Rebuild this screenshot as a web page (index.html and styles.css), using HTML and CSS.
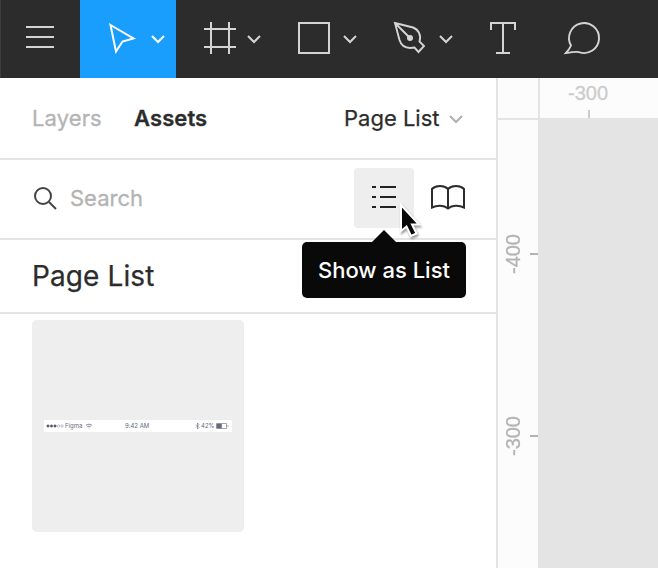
FILE: index.html
```html
<!DOCTYPE html>
<html lang="en">
<head>
<meta charset="utf-8">
<title>Assets</title>
<link rel="stylesheet" href="styles.css">
</head>
<body>
<div class="app">
  <header class="toolbar">
    <div class="tool tool-menu"><svg width="80" height="78"><path d="M26 27h28M26 37h28M26 47h28"/></svg></div>
    <div class="tool active"><svg width="96" height="78"><path d="M30.500 25L53.500 38.500 42.500 41.500 36 51.500Z"/><path class="chev" d="M72 36l6 6 6-6"/></svg></div>
    <div class="tool"><svg width="96" height="78"><path d="M35 22v32M53 22v32M28 29h32M28 47h32"/><path class="chev" d="M72 36l6 6 6-6"/></svg></div>
    <div class="tool"><svg width="96" height="78"><path d="M27 23h30v30H27z"/><path class="chev" d="M72 36l6 6 6-6"/></svg></div>
    <div class="tool"><svg width="96" height="78"><path class="thin" d="M27 23L45 27.500C50.500 29.500 53.500 35 51.500 41.500L56 46 50.500 52 46.500 47.500C39 49 33.500 46.500 31.500 40ZM27 23L41 37"/><circle class="dot" cx="42" cy="38" r="3"/><path class="chev" d="M72 36l6 6 6-6"/></svg></div>
    <div class="tool tool-small"><svg width="80" height="78"><path d="M27 30v-7h24v7M39 23v30M32 53h14"/></svg></div>
    <div class="tool tool-small"><svg width="80" height="78"><path class="thin" d="M27 45.500A15 15 0 1 1 35 52.200Q33 51.200 22 53Q25.500 49 27 45.500Z"/></svg></div>
  </header>
  <main class="workspace">
    <aside class="panel">
      <nav class="tabs">
        <span class="tab">Layers</span><span class="tab selected">Assets</span>
        <span class="page">Page List</span><svg class="page-chev" width="16" height="12"><path d="M2 3l6 6 6-6"/></svg>
      </nav>
      <div class="search">
        <svg class="lens" width="26" height="26"><circle cx="11" cy="11" r="8"/><path d="M17 17l7 7"/></svg>
        <span class="placeholder">Search</span>
        <div class="list-button">
          <svg width="60" height="60"><path d="M18 19h4M26 19h16M18 29h4M26 29h16M18 39h4M26 39h16"/></svg>
          <div class="tooltip">Show as List</div>
          <svg class="pointer" width="26" height="38"><path d="M2 3v26l5.500-4.500 4.500 9.500 5.500-2.500-4.500-9H20Z"/></svg>
        </div>
        <svg class="book" width="36" height="28"><path d="M2 23.500V5C6 1 14 1 18 5 22 1 30 1 34 5V23.500C29 21 22 21 18 24.500 14 21 7 21 2 23.500ZM18 5v19"/></svg>
      </div>
      <h2 class="heading">Page List</h2>
      <div class="assets">
        <div class="card">
          <div class="status">
            <svg class="signal" width="18" height="6"><circle class="full" cx="2" cy="3" r="1.300"/><circle class="full" cx="5.500" cy="3" r="1.300"/><circle class="full" cx="9" cy="3" r="1.300"/><circle cx="12.500" cy="3" r="1.200"/><circle cx="16" cy="3" r="1.200"/></svg>
            <span class="carrier">Figma</span>
            <svg class="wifi" width="8" height="6"><path d="M1 2.200Q4 .1 7 2.200M2.300 3.700Q4 2.600 5.700 3.700M3.700 5h.7"/></svg>
            <span class="time">9:42 AM</span>
            <svg class="bluetooth" width="5" height="8"><path d="M1 2.500l3 3-1.500 1.500v-6L4 2.500l-3 3"/></svg>
            <span class="percent">42%</span>
            <svg class="battery" width="13" height="6"><path d="M.5.5h10v5H.5z"/><path class="charge" d="M1 1h4.500v4H1z"/><path d="M12 2v2"/></svg>
          </div>
        </div>
      </div>
    </aside>
    <section class="stage">
      <div class="corner"></div>
      <div class="ruler-top"><span>-300</span><i></i></div>
      <div class="ruler-left">
        <div class="mark mark-400"><span>-400</span><i></i></div>
        <div class="mark"><span>-300</span><i></i></div>
      </div>
      <div class="canvas"></div>
    </section>
  </main>
</div>
</body>
</html>
```

FILE: styles.css
```css
* { box-sizing: border-box; }
body { margin: 0; overflow: hidden; background: #fff; font-family: Inter, "Liberation Sans", sans-serif; color: #2c2c2c; }
svg { display: block; flex: none; fill: none; }
.app { width: 658px; height: 568px; display: flex; flex-direction: column; }
.toolbar { display: flex; height: 78px; flex: none; background: #2c2c2c; overflow: hidden; }
.tool { width: 96px; flex: none; stroke: #d4d4d4; stroke-width: 2; }
.tool-menu { width: 80px; box-shadow: inset 1px 0 #3d3d3d; }
.tool-small { width: 80px; }
.tool.active { background: #1a9efe; stroke: #fff; }
.thin { stroke-width: 1.9; stroke-linejoin: miter; }
.chev { stroke-width: 2; }
.dot { fill: #d4d4d4; stroke: none; }
.workspace { display: flex; flex: 1; }
.panel { width: 498px; border-right: 2px solid #e4e4e4; }
.tabs { height: 82px; border-bottom: 2px solid #e4e4e4; display: flex; align-items: center; padding-left: 32px; font-size: 22px; line-height: 80px; white-space: nowrap; }
.tab { width: 102px; color: #b4b4b4; letter-spacing: .1px; -webkit-text-stroke: .3px; }
.tab.selected { font-weight: 600; color: #2c2c2c; width: 210px; }
.page { width: 104px; -webkit-text-stroke: .25px; }
.page-chev { stroke: #b0b0b0; stroke-width: 2; margin-top: 2px; }
.search { height: 80px; border-bottom: 2px solid #e4e4e4; display: flex; align-items: center; padding: 0 0 2px 32px; }
.lens { stroke: #444; stroke-width: 2; margin-right: 12px; }
.placeholder { width: 284px; font-size: 22px; color: #b3b3b3; -webkit-text-stroke: .3px; }
.list-button { position: relative; width: 60px; height: 60px; border-radius: 4px; background: #eee; stroke: #222; stroke-width: 2; }
.book { stroke: #2c2c2c; stroke-width: 2; margin-left: 16px; }
.tooltip { position: absolute; left: -52px; top: 74px; z-index: 2; width: 164px; height: 56px; border-radius: 5px; background: #090909; color: #fff; font-size: 22px; font-weight: 500; line-height: 56px; text-align: center; white-space: nowrap; }
.tooltip::before { content: ""; position: absolute; left: 70px; top: -12px; border: 12px solid transparent; border-top: 0; border-bottom-color: #090909; }
.pointer { position: absolute; left: 45px; top: 34px; z-index: 3; fill: #080808; stroke: #fff; stroke-width: 2; overflow: visible; filter: drop-shadow(1px 2px 1px #0006); }
.heading { margin: 0; height: 74px; padding-left: 32px; border-bottom: 2px solid #e4e4e4; font-size: 28px; font-weight: 400; line-height: 72px; letter-spacing: .1px; -webkit-text-stroke: .25px; }
.assets { padding: 6px 32px; }
.card { width: 212px; height: 212px; border-radius: 5px; background: #eee; display: flex; align-items: center; justify-content: center; }
.status { width: 188px; height: 12px; background: #fff; display: flex; align-items: center; padding-left: 2px; font-size: 6px; line-height: 12px; color: #686a7d; stroke: #686a7d; stroke-width: .8; white-space: nowrap; }
.signal { stroke-width: .4; }
.full { fill: #555669; }
.carrier { width: 20px; padding-left: 1px; }
.wifi { margin-left: 1px; }
.time { width: 69px; padding-left: 32px; flex: 1; }
.percent { width: 14px; }
.bluetooth { margin-right: 1px; stroke-width: .6; }
.battery { margin: 0 3px 0 1px; stroke-width: .6; }
.charge { fill: #686a7d; }
.stage { width: 160px; display: grid; grid-template: 40px 450px / 40px 120px; background: #fcfcfc; color: #b3b3b3; font: 20px/24px "Liberation Sans", sans-serif; -webkit-text-stroke: .3px; }
.corner { width: 42px; height: 42px; border-right: 2px solid #e4e4e4; border-bottom: 2px solid #e4e4e4; }
.ruler-top { display: flex; flex-direction: column; align-items: center; width: 100px; height: 40px; padding: 3px 0 0; color: #ccc; border-left: 2px solid #e4e4e4; }
.ruler-top span { margin-left: -2px; }
.ruler-top i { width: 2px; height: 8px; margin-top: 5px; background: #ccc; }
.ruler-left { padding-top: 111px; }
.mark { height: 50px; display: flex; align-items: center; justify-content: space-between; }
.mark-400 { margin-bottom: 132px; }
.mark span { writing-mode: vertical-rl; transform: rotate(180deg); margin-left: 3px; }
.mark i { width: 8px; height: 2px; background: #b3b3b3; }
.canvas { background: #e4e4e4; }
```
